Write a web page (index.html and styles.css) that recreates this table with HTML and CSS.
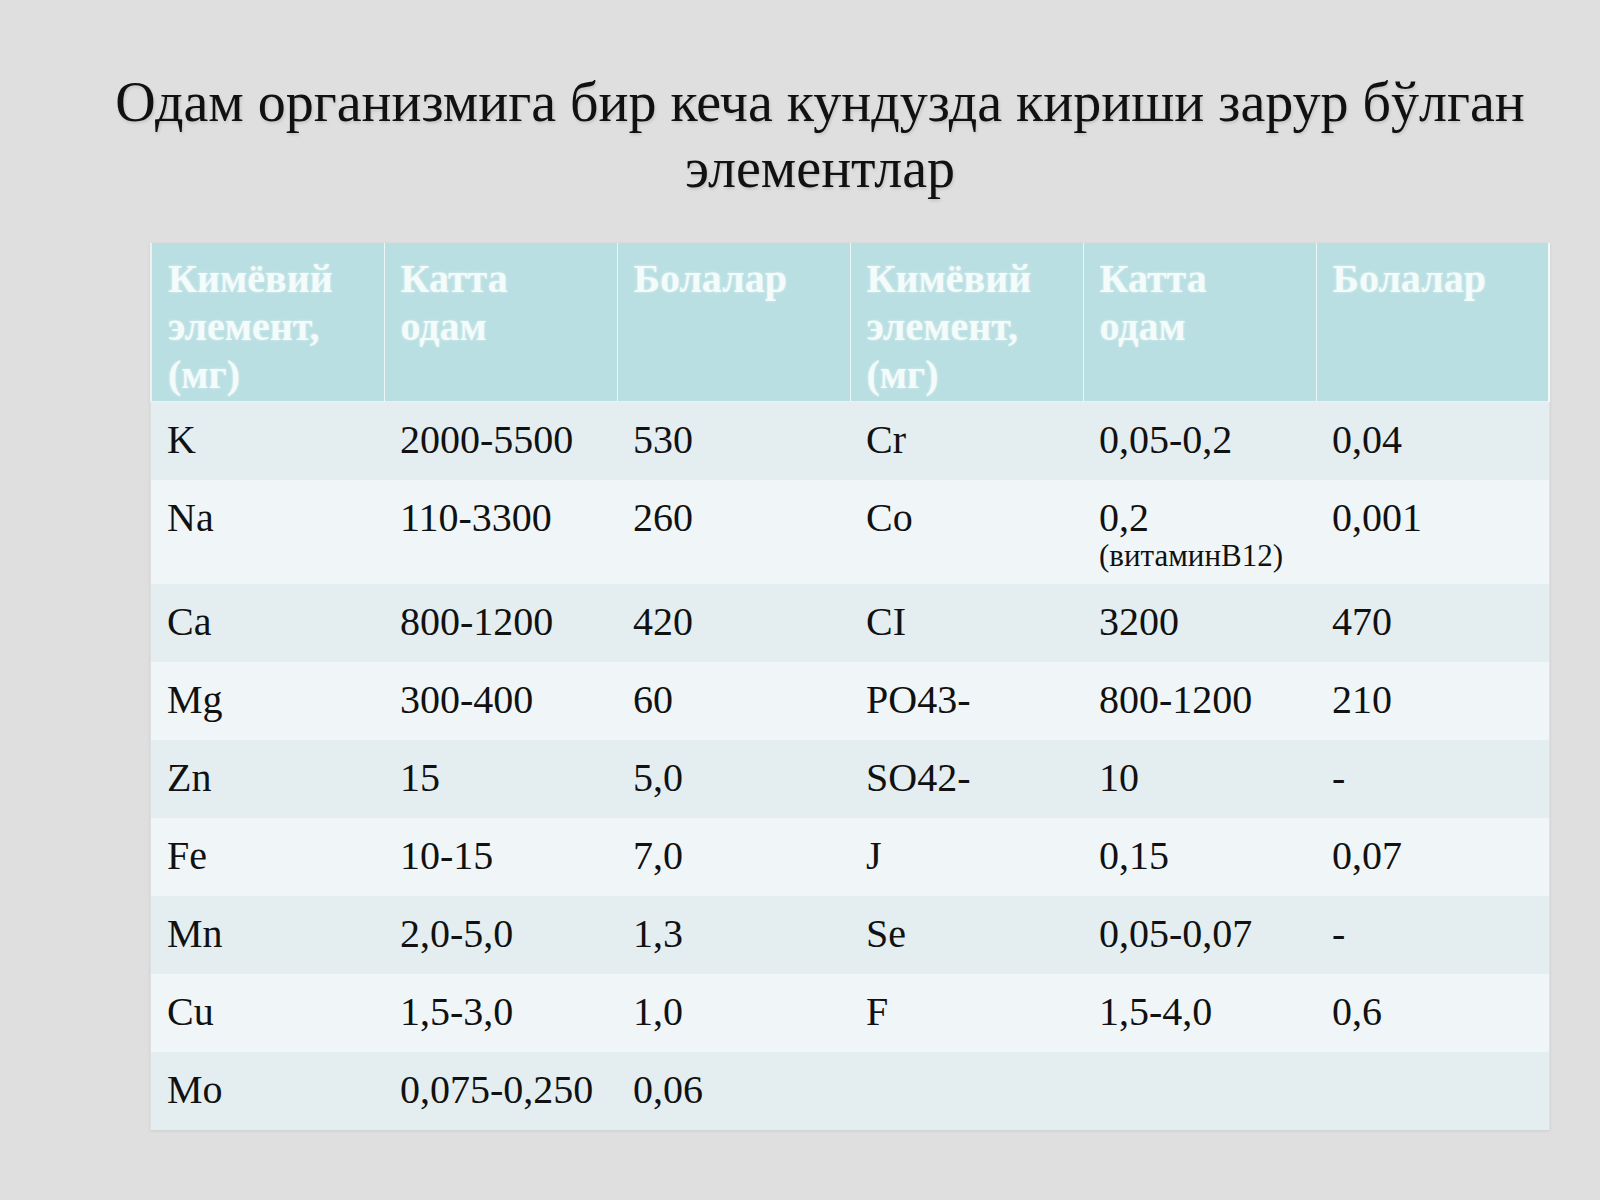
FILE: index.html
```html
<!DOCTYPE html>
<html lang="uz">
<head>
<meta charset="utf-8">
<title>Элементлар</title>
<link rel="stylesheet" href="styles.css">
</head>
<body>
<div class="slide">
  <h1 class="title">Одам организмига бир кеча кундузда кириши зарур бўлган элементлар</h1>
  <div class="table-wrap">
    <table class="elements">
      <thead>
        <tr>
          <th>Кимёвий<br>элемент,<br>(мг)</th>
          <th>Катта<br>одам</th>
          <th>Болалар</th>
          <th>Кимёвий<br>элемент,<br>(мг)</th>
          <th>Катта<br>одам</th>
          <th>Болалар</th>
        </tr>
      </thead>
      <tbody>
        <tr class="odd"><td>K</td><td>2000-5500</td><td>530</td><td>Cr</td><td>0,05-0,2</td><td>0,04</td></tr>
        <tr class="even tall"><td>Na</td><td>110-3300</td><td>260</td><td>Co</td><td>0,2<span class="sub">(витаминB12)</span></td><td>0,001</td></tr>
        <tr class="odd"><td>Ca</td><td>800-1200</td><td>420</td><td>CI</td><td>3200</td><td>470</td></tr>
        <tr class="even"><td>Mg</td><td>300-400</td><td>60</td><td>PO43-</td><td>800-1200</td><td>210</td></tr>
        <tr class="odd"><td>Zn</td><td>15</td><td>5,0</td><td>SO42-</td><td>10</td><td>-</td></tr>
        <tr class="even"><td>Fe</td><td>10-15</td><td>7,0</td><td>J</td><td>0,15</td><td>0,07</td></tr>
        <tr class="odd"><td>Mn</td><td>2,0-5,0</td><td>1,3</td><td>Se</td><td>0,05-0,07</td><td>-</td></tr>
        <tr class="even"><td>Cu</td><td>1,5-3,0</td><td>1,0</td><td>F</td><td>1,5-4,0</td><td>0,6</td></tr>
        <tr class="odd"><td>Mo</td><td>0,075-0,250</td><td>0,06</td><td></td><td></td><td></td></tr>
      </tbody>
    </table>
  </div>
</div>
</body>
</html>
```
FILE: styles.css
```css
html, body {
  margin: 0;
  padding: 0;
}
body {
  width: 1600px;
  height: 1200px;
  background: #dfdfdf;
  font-family: "Liberation Serif", "Times New Roman", serif;
  color: #111;
  overflow: hidden;
}
.slide {
  padding-top: 69px;
}
.title {
  margin: 0;
  padding-left: 40px;
  font-weight: normal;
  font-size: 56px;
  line-height: 66px;
  text-align: center;
  color: #111;
  text-shadow: 1px 2px 3px rgba(0, 0, 0, 0.12);
}
.table-wrap {
  padding-left: 150px;
  margin-top: 42px;
}
.elements {
  width: 1400px;
  border-collapse: collapse;
  table-layout: fixed;
  box-shadow: 0 1px 3px rgba(0, 0, 0, 0.08);
}
.elements th,
.elements td {
  text-align: left;
  vertical-align: top;
  font-size: 40px;
  line-height: 48px;
  padding: 14px 16px 16px 16px;
}
.elements th {
  background: #b9dfe2;
  color: #f3fbfb;
  font-weight: bold;
  padding: 12px 16px 2px 16px;
  height: 144px;
  border-left: 1px solid rgba(255, 255, 255, 0.75);
  text-shadow: 0 0 3px rgba(255, 255, 255, 0.5);
}
.elements th:first-child {
  border-left: 2px solid rgba(255, 255, 255, 0.6);
}
.elements th:last-child {
  border-right: 2px solid rgba(255, 255, 255, 0.8);
}
.elements thead tr {
  border-bottom: 1px solid #e4f3f4;
}
.elements td {
  height: 48px;
  color: #111;
}
.odd td {
  background: #e4eef0;
}
.even td {
  background: #f0f6f7;
}
.tall td {
  padding-bottom: 14px;
}
.sub {
  display: block;
  font-size: 31px;
  line-height: 28px;
}
```
